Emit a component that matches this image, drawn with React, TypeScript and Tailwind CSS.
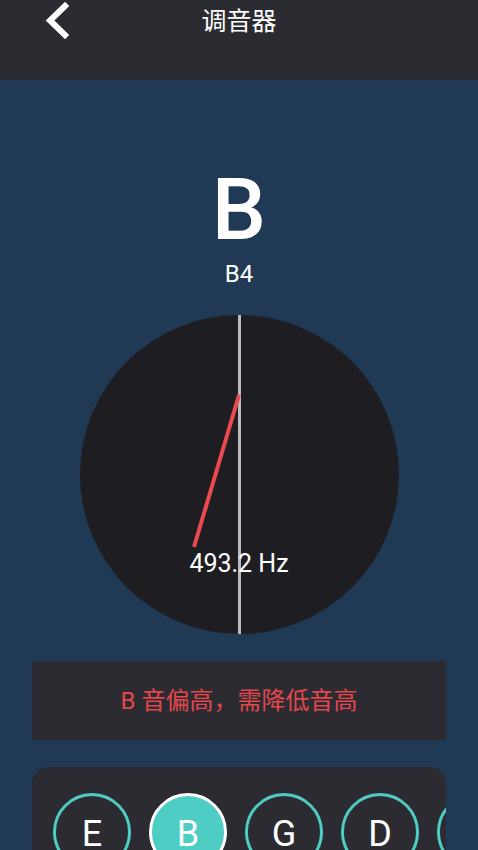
import React from 'react';

const notes = [
  { name: 'E', active: false },
  { name: 'B', active: true },
  { name: 'G', active: false },
  { name: 'D', active: false },
  { name: '', active: false },
];

const font = { fontFamily: 'Roboto, "Noto Sans CJK SC", sans-serif' };

const App: React.FC = () => {
  return (
    <div className="w-[478px] h-[850px] overflow-hidden bg-[#203955] flex flex-col" style={font}>
      {/* header */}
      <div className="h-[80px] bg-[#2b2b32] shrink-0 relative">
        <div className="h-[43px] flex items-center justify-center">
          <span className="text-white text-[25px] leading-none">调音器</span>
        </div>
        <svg className="absolute left-[42px] top-0" width="30" height="42" viewBox="0 0 30 42">
          <path d="M23 6 L8 20.5 L23 35" fill="none" stroke="white" strokeWidth="6" strokeLinecap="square" />
        </svg>
      </div>

      {/* note display */}
      <div className="flex flex-col items-center pt-[87px] shrink-0">
        <div className="text-white text-[86px] leading-none font-medium">B</div>
        <div className="text-white text-[24px] leading-none mt-[9px]">B4</div>
      </div>

      {/* dial */}
      <div className="flex justify-center mt-[29px] shrink-0">
        <div className="relative w-[319px] h-[319px] rounded-full bg-[#1e1d21] overflow-hidden">
          <div className="absolute left-[158px] top-0 w-[3px] h-full bg-[#bcbcbf]" />
          <svg className="absolute left-0 top-0" width="319" height="319" viewBox="0 0 319 319">
            <line x1="159" y1="80" x2="114" y2="232" stroke="#ea4a50" strokeWidth="4" />
          </svg>
          <div className="absolute left-0 right-0 top-[236px] text-center text-white text-[25px] leading-none">
            493.2 Hz
          </div>
        </div>
      </div>

      {/* message */}
      <div className="mx-[32px] mt-[27px] h-[79px] shrink-0 bg-[#2b2b31] flex items-center justify-center">
        <span className="text-[#e2474d] text-[24px] leading-none">B 音偏高，需降低音高</span>
      </div>

      {/* string selector */}
      <div className="mx-[32px] mt-[27px] rounded-[16px] bg-[#2b2b31] overflow-hidden h-[120px] shrink-0">
        <div className="flex gap-[18px] pl-[21px] pt-[26px]">
          {notes.map((n, i) => (
            <div
              key={i}
              className={
                n.active
                  ? 'shrink-0 w-[78px] h-[78px] rounded-full bg-[#4ecdc4] border-[3px] border-white flex items-center justify-center'
                  : 'shrink-0 w-[78px] h-[78px] rounded-full border-[3px] border-[#4ecdc4] flex items-center justify-center'
              }
            >
              {n.name && <span className="text-white text-[36px] leading-none mt-[4px]">{n.name}</span>}
            </div>
          ))}
        </div>
      </div>
    </div>
  );
};

export default App;
